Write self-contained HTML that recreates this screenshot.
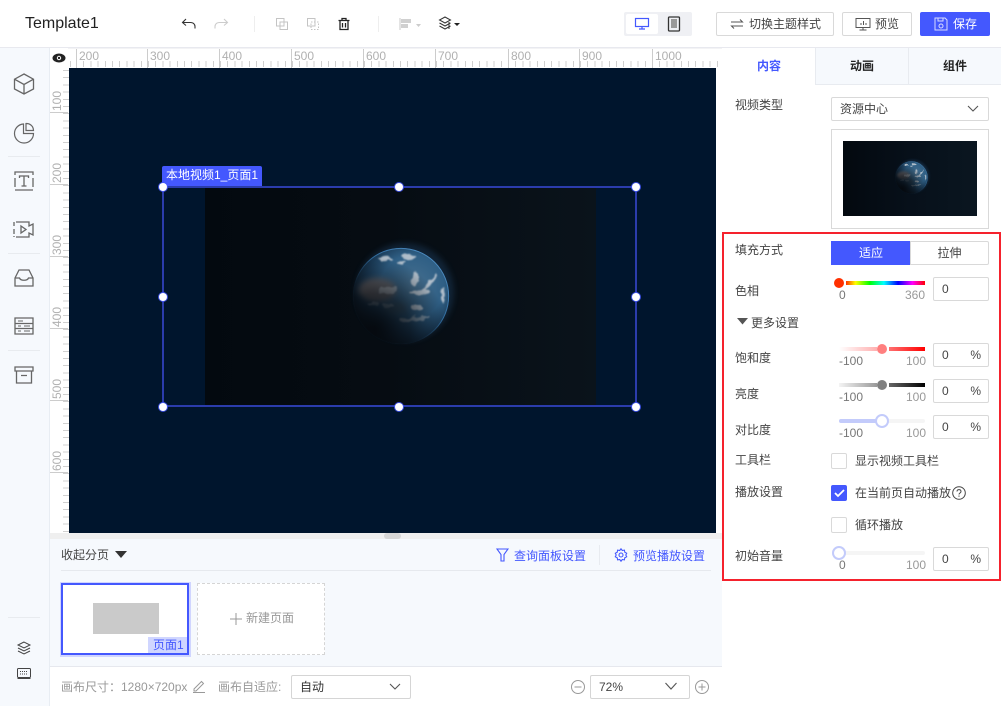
<!DOCTYPE html>
<html lang="zh"><head><meta charset="utf-8"><title>Template1</title>
<style>
*{box-sizing:border-box}
html,body{margin:0;padding:0;width:1001px;height:706px;overflow:hidden;background:#fff;font-family:"Liberation Sans","Noto Sans CJK SC",sans-serif;font-size:12px;color:#333}
.a{position:absolute}
.t{position:absolute;white-space:nowrap;line-height:16px}
svg{position:absolute;overflow:visible}
.btn{position:absolute;top:12px;height:24px;border:1px solid #d9d9d9;border-radius:2px;background:#fff;line-height:22px;color:#444}
.inp{position:absolute;left:933px;width:56px;height:24px;border:1px solid #d9d9d9;border-radius:2px;background:#fff;color:#444;line-height:22px;padding-left:8px}
.inp i{position:absolute;right:7px;top:0;font-style:normal}
.lab{position:absolute;left:735px;white-space:nowrap;line-height:16px;color:#444}
.min,.max{position:absolute;font-size:12px;line-height:14px;color:#999}
.min{color:#777}
.cb{position:absolute;left:831px;width:16px;height:16px;border:1px solid #d9d9d9;border-radius:2px;background:#fff}
.h{position:absolute;width:8px;height:8px;border-radius:50%;background:#fff;box-shadow:0 0 0 1px rgba(68,88,254,.85)}
.rh{position:absolute;top:0;height:20px;font-size:12px;line-height:14px;color:#b0b0b0;border-left:1px solid #ccc;padding-left:2px}
.rv{position:absolute;left:0;width:18px;border-bottom:1px solid #ccc;height:60px}
.rv span{position:absolute;left:1px;bottom:1px;transform-origin:0 100%;transform:rotate(-90deg) translate(0,13px);font-size:12px;line-height:13px;color:#b0b0b0;white-space:nowrap}
</style></head><body>

<svg width="0" height="0" style="position:absolute"><defs>
<radialGradient id="gb" cx="62%" cy="40%" r="66%"><stop offset="0" stop-color="#47708f"/><stop offset=".5" stop-color="#2f5f85"/><stop offset=".75" stop-color="#1a3a56"/><stop offset="1" stop-color="#0a1520"/></radialGradient>
<linearGradient id="gr" x1="1" y1="0" x2="0.1" y2="1"><stop offset="0" stop-color="#5a9ad0"/><stop offset=".45" stop-color="#2f6a9c"/><stop offset=".7" stop-color="#0c1a28" stop-opacity=".4"/><stop offset="1" stop-color="#060b10" stop-opacity="0"/></linearGradient>
<radialGradient id="gs" cx="22%" cy="85%" r="75%"><stop offset="0" stop-color="#05090e" stop-opacity=".97"/><stop offset=".5" stop-color="#05090e" stop-opacity=".65"/><stop offset="1" stop-color="#05090e" stop-opacity="0"/></radialGradient>
<filter id="cl" x="-20%" y="-20%" width="140%" height="140%"><feTurbulence type="fractalNoise" baseFrequency=".14" numOctaves="2" seed="4"/><feDisplacementMap in="SourceGraphic" scale="7" xChannelSelector="R" yChannelSelector="G"/><feGaussianBlur stdDeviation=".7"/></filter>
<filter id="bl2" x="-30%" y="-30%" width="160%" height="160%"><feGaussianBlur stdDeviation="3"/></filter>
<clipPath id="cc"><circle cx="50" cy="50" r="49"/></clipPath>
<symbol id="earth" viewBox="0 0 100 100" overflow="visible">
<circle cx="54" cy="46" r="50" fill="#2a5a8a" opacity=".28" filter="url(#bl2)"/>
<circle cx="50" cy="50" r="49" fill="url(#gb)"/>
<g clip-path="url(#cc)">
<g filter="url(#bl2)"><ellipse cx="26" cy="44" rx="19" ry="12" fill="#857570" opacity=".75"/><ellipse cx="44" cy="62" rx="12" ry="6" fill="#4c606c" opacity=".5"/></g>
<g filter="url(#cl)" fill="#c6ced6" opacity=".85">
<ellipse cx="58" cy="10" rx="8" ry="3"/><ellipse cx="35" cy="12" rx="7" ry="2"/><ellipse cx="50" cy="16" rx="5" ry="1.500"/>
<ellipse cx="64" cy="33" rx="2.500" ry="7.500"/><ellipse cx="79" cy="36" rx="11" ry="2" transform="rotate(-50 79 36)"/><ellipse cx="70" cy="46" rx="11" ry="2.200"/>
<ellipse cx="93" cy="49" rx="1.800" ry="8"/><ellipse cx="67" cy="62" rx="6" ry="3"/><ellipse cx="64" cy="73" rx="16" ry="2" opacity=".7" transform="rotate(-6 64 73)"/>
<ellipse cx="36" cy="44" rx="9" ry="4" opacity=".7"/><ellipse cx="22" cy="58" rx="5" ry="2" opacity=".5"/><ellipse cx="38" cy="60" rx="6" ry="2" opacity=".5"/></g>
<circle cx="50" cy="50" r="49" fill="url(#gs)"/>
</g>
<circle cx="50" cy="50" r="48.600" fill="none" stroke="url(#gr)" stroke-width="1"/>
</symbol>
</defs></svg>

<!-- top bar -->
<div class="a" style="left:0;top:0;width:1001px;height:48px;background:#fff;border-bottom:1px solid #e8e9ef"></div>
<div class="t" style="left:25px;top:14px;font-size:16px;line-height:20px;color:#222">Template1</div>
<svg style="left:180px;top:15px" width="18" height="18" viewBox="0 0 18 18" fill="none" stroke="#333" stroke-width="1.100"><path d="M6 4 2.500 7.500 6 10.500M3 7.500h7.500c3 0 4.500 2 4.500 4v2"/></svg>
<svg style="left:212px;top:15px" width="18" height="18" viewBox="0 0 18 18" fill="none" stroke="#ccc" stroke-width="1.100"><path d="M12 4l3.500 3.500L12 10.500M15 7.500H7.500c-3 0-4.500 2-4.500 4v2"/></svg>
<div class="a" style="left:254px;top:16px;width:1px;height:16px;background:#eee"></div>
<svg style="left:275px;top:17px" width="14" height="14" viewBox="0 0 14 14" fill="none" stroke="#c4c4c4"><rect x="1.500" y="1.500" width="7.500" height="7.500"/><rect x="5" y="5" width="7.500" height="7.500"/></svg>
<svg style="left:306px;top:17px" width="14" height="14" viewBox="0 0 14 14" fill="none" stroke="#c4c4c4"><rect x="1.500" y="1.500" width="7.500" height="7.500"/><rect x="5" y="5" width="7.500" height="7.500" stroke-dasharray="1.500 1.500"/></svg>
<svg style="left:337px;top:17px" width="14" height="14" viewBox="0 0 14 14" fill="none" stroke="#222" stroke-width="1.300"><path d="M1.500 3.500h11M5 3.500V1.500h4v2M3 3.500V12.500h8V3.500M5.500 6v4.500M8.500 6v4.500"/></svg>
<div class="a" style="left:378px;top:16px;width:1px;height:16px;background:#eee"></div>
<svg style="left:399px;top:17px" width="24" height="14" viewBox="0 0 24 14"><path d="M1 1v12" stroke="#c8c8c8"/><rect x="2" y="2" width="10" height="4" fill="#d0d0d0"/><rect x="2" y="7" width="7" height="4" fill="#d0d0d0"/><path d="M17 7h5l-2.500 3z" fill="#ccc"/></svg>
<svg style="left:438px;top:16px" width="24" height="16" viewBox="0 0 24 16" fill="none" stroke="#333"><path d="M7 1 1.500 4 7 7l5.500-3zM1.500 7 7 10l5.500-3M1.500 10 7 13l5.500-3"/><path d="M11 6v7" stroke-width="1"/><path d="M16 7h6l-3 3z" fill="#222" stroke="none"/></svg>

<div class="a" style="left:624px;top:12px;width:68px;height:24px;background:#eff0f4;border-radius:2px"></div>
<div class="a" style="left:626px;top:14px;width:32px;height:20px;background:#fff;border-radius:2px"></div>
<svg style="left:634px;top:17px" width="16" height="14" viewBox="0 0 16 14" fill="none" stroke="#4458fe" stroke-width="1.200"><rect x="1.500" y="1.500" width="13" height="8"/><path d="M8 9.500v2M5 12h6"/></svg>
<svg style="left:667px;top:16px" width="14" height="16" viewBox="0 0 14 16" fill="none" stroke="#333" stroke-width="1.300"><rect x="1.500" y="1" width="11" height="14" rx="1"/><rect x="4" y="3" width="6" height="9" fill="#999" stroke="none"/></svg>

<div class="btn" style="left:716px;width:118px"></div>
<svg style="left:730px;top:18px" width="14" height="12" viewBox="0 0 14 12" fill="none" stroke="#555"><path d="M1 4h11.500L10 1.500M13 8H1.500L4 10.500"/></svg>
<div class="t" style="left:749px;top:16px;color:#444">切换主题样式</div>
<div class="btn" style="left:842px;width:70px"></div>
<svg style="left:855px;top:17px" width="16" height="14" viewBox="0 0 16 14" fill="none" stroke="#555"><rect x="1" y="1.500" width="14" height="9"/><path d="M8 10.500V13M4.500 13h7M6 8V6M8.500 8V4M11 8V6"/></svg>
<div class="t" style="left:875px;top:16px;color:#444">预览</div>
<div class="btn" style="left:920px;width:70px;background:#4458fe;border-color:#4458fe"></div>
<svg style="left:934px;top:17px" width="14" height="14" viewBox="0 0 14 14" fill="none" stroke="#d8dcff"><path d="M1 1h10l2 2v10H1z"/><path d="M4 1v3h5V1"/><circle cx="7" cy="9" r="2"/></svg>
<div class="t" style="left:953px;top:16px;color:#fff">保存</div>

<!-- left sidebar -->
<div class="a" style="left:0;top:48px;width:50px;height:658px;background:#f6f9fd;border-right:1px solid #e8edf3"></div>
<svg style="left:13px;top:72px" width="22" height="24" viewBox="0 0 22 24" fill="none" stroke="#666" stroke-width="1.300"><path d="M11 2 20.500 7.200V17L11 22 1.500 17V7.200zM1.500 7.200 11 12.500 20.500 7.200M11 12.500V22"/></svg>
<svg style="left:13px;top:122px" width="22" height="22" viewBox="0 0 22 22" fill="none" stroke="#666" stroke-width="1.200"><path d="M10.500 2A9.500 9.500 0 1 0 20.500 11.500H10.500z"/><path d="M13 1.500A7 7 0 0 1 20.500 8.500H13z"/></svg>
<div class="a" style="left:8px;top:156px;width:32px;height:1px;background:#e8ebef"></div>
<svg style="left:14px;top:171px" width="20" height="20" viewBox="0 0 20 20" fill="none" stroke="#666" stroke-width="1.300"><path d="M1 4V1h18v3M1 7v9M19 7v9M1 19h18"/><path d="M5.500 7V5h9v2M10 5v10M7.500 15h5"/></svg>
<svg style="left:13px;top:221px" width="22" height="17" viewBox="0 0 22 17" fill="none" stroke="#666" stroke-width="1.300"><path d="M3 1h13v4l4-2v11l-4-2v4H3"/><path d="M1 1v4M1 8v5M1 15v1"/><path d="M8 5l5 3.500L8 12z"/></svg>
<div class="a" style="left:8px;top:253px;width:32px;height:1px;background:#e8ebef"></div>
<svg style="left:14px;top:269px" width="20" height="18" viewBox="0 0 20 18" fill="none" stroke="#666" stroke-width="1.300"><path d="M1 9 5 1h10l4 8v8H1zM1 9h4.500c1 3 8 3 9 0H19"/></svg>
<svg style="left:14px;top:317px" width="20" height="18" viewBox="0 0 20 18" fill="none" stroke="#666" stroke-width="1.300"><path d="M1 1h18v16H1zM1 6.500h18M1 11.500h18"/><path d="M4 4h5M4 9h3M10 9h6M4 14h3M10 14h6" stroke-width="1"/></svg>
<div class="a" style="left:8px;top:350px;width:32px;height:1px;background:#e8ebef"></div>
<svg style="left:14px;top:366px" width="20" height="18" viewBox="0 0 20 18" fill="none" stroke="#666" stroke-width="1.300"><path d="M1 1h18v4H1zM2.500 5v12h15V5M7 9.500h6"/></svg>
<div class="a" style="left:8px;top:617px;width:32px;height:1px;background:#e8ebef"></div>
<svg style="left:17px;top:641px" width="14" height="14" viewBox="0 0 14 14" fill="none" stroke="#444"><path d="M7 1 1 4l6 3 6-3zM1 7l6 3 6-3M1 10l6 3 6-3"/></svg>
<svg style="left:17px;top:668px" width="14" height="11" viewBox="0 0 14 11" fill="none" stroke="#444"><rect x=".5" y=".5" width="13" height="9" rx="1"/><path d="M3 3.500h8M3 6h8" stroke-dasharray="1 1"/><path d="M.5 10.500h13"/></svg>

<!-- rulers -->
<div class="a" style="left:50px;top:48px;width:672px;height:20px;background:#f3f3f5"></div>
<div class="a" style="left:50px;top:48px;width:18px;height:20px;background:#fff"></div>
<svg style="left:52px;top:53px" width="14" height="10" viewBox="0 0 14 10"><ellipse cx="7" cy="5" rx="6.500" ry="4.500" fill="#222"/><circle cx="7" cy="5" r="2.200" fill="#fff"/><circle cx="7" cy="5" r="1.200" fill="#222"/></svg>
<div class="a" style="left:68px;top:49px;width:654px;height:19px;background:#fff;overflow:hidden">
<div class="a" style="left:0;top:12px;width:654px;height:6px;background:repeating-linear-gradient(90deg,#d0d0d0 0 1px,transparent 1px 7.200px);background-position:8px 0"></div>
<div class="rh" style="left:8px">200</div><div class="rh" style="left:79px">300</div><div class="rh" style="left:151px">400</div><div class="rh" style="left:223px">500</div><div class="rh" style="left:295px">600</div><div class="rh" style="left:367px">700</div><div class="rh" style="left:440px">800</div><div class="rh" style="left:511px">900</div><div class="rh" style="left:584px">1000</div>
</div>
<div class="a" style="left:50px;top:68px;width:19px;height:465px;background:#fff;overflow:hidden">
<div class="a" style="left:13px;top:0;width:6px;height:465px;background:repeating-linear-gradient(180deg,#d0d0d0 0 1px,transparent 1px 7.200px);background-position:0 2px"></div>
<div class="rv" style="top:-15px"><span>100</span></div><div class="rv" style="top:57px"><span>200</span></div><div class="rv" style="top:129px"><span>300</span></div><div class="rv" style="top:201px"><span>400</span></div><div class="rv" style="top:273px"><span>500</span></div><div class="rv" style="top:345px"><span>600</span></div>
</div>

<!-- canvas -->
<div class="a" style="left:69px;top:68px;width:647px;height:465px;background:#00152d"></div>
<div class="a" style="left:716px;top:68px;width:6px;height:465px;background:#fff"></div>
<div class="a" style="left:205px;top:187px;width:391px;height:219px;background:linear-gradient(90deg,#03090f 0,#060c12 45%,#0a131b 100%)"></div>
<svg style="left:352px;top:247px" width="98" height="98" viewBox="0 0 100 100"><use href="#earth"/></svg>
<div class="a" style="left:162px;top:186px;width:475px;height:221px;border:2px solid #2b3cac"></div>
<div class="a" style="left:162px;top:166px;width:100px;height:20px;background:#4458fe;border-radius:2px 2px 0 0;color:#fff;line-height:19px;padding-left:4px;white-space:nowrap">本地视频1_页面1</div>
<div class="h" style="left:159px;top:183px"></div><div class="h" style="left:395px;top:183px"></div><div class="h" style="left:632px;top:183px"></div>
<div class="h" style="left:159px;top:293px"></div><div class="h" style="left:632px;top:293px"></div>
<div class="h" style="left:159px;top:403px"></div><div class="h" style="left:395px;top:403px"></div><div class="h" style="left:632px;top:403px"></div>

<!-- scrollbar strip -->
<div class="a" style="left:50px;top:533px;width:672px;height:6px;background:#efefef"></div>
<div class="a" style="left:384px;top:533px;width:17px;height:6px;background:#d6d6d6;border-radius:3px"></div>

<!-- pages panel -->
<div class="a" style="left:50px;top:539px;width:672px;height:127px;background:#f6f9fd"></div>
<div class="a" style="left:61px;top:570px;width:650px;height:1px;background:#e6e9ee"></div>
<div class="t" style="left:61px;top:547px;color:#444">收起分页</div>
<svg style="left:115px;top:551px" width="12" height="8" viewBox="0 0 12 8"><path d="M0 0h12L6 7z" fill="#333"/></svg>
<svg style="left:496px;top:548px" width="13" height="14" viewBox="0 0 13 14" fill="none" stroke="#4458fe" stroke-width="1.100"><path d="M1 1h11L8 6.500V13H5V6.500z"/></svg>
<div class="t" style="left:514px;top:548px;color:#4458fe">查询面板设置</div>
<div class="a" style="left:599px;top:545px;width:1px;height:20px;background:#e8ebf0"></div>
<svg style="left:614px;top:548px" width="14" height="14" viewBox="0 0 14 14" fill="none" stroke="#4458fe" stroke-width="1.100"><path d="M7 .8l1.300 1.700 2.100-.4.400 2.100 1.900 1L11.800 7l.9 1.800-1.900 1-.4 2.100-2.100-.4L7 13.200l-1.300-1.700-2.100.4-.4-2.100-1.900-1L2.200 7l-.9-1.800 1.900-1 .4-2.100 2.100.4z"/><circle cx="7" cy="7" r="2"/></svg>
<div class="t" style="left:633px;top:548px;color:#4458fe">预览播放设置</div>

<div class="a" style="left:60px;top:582px;width:131px;height:75px;border:2px solid #d0d5ff"></div>
<div class="a" style="left:61px;top:583px;width:128px;height:72px;background:#fff;border:2px solid #4458fe"></div>
<div class="a" style="left:93px;top:603px;width:66px;height:31px;background:#cacaca"></div>
<div class="a" style="left:148px;top:637px;width:39px;height:16px;background:#d0d6ff;color:#4458fe;line-height:17px;padding-left:5px;white-space:nowrap">页面1</div>
<div class="a" style="left:197px;top:583px;width:128px;height:72px;background:#fff;border:1px dashed #d5d5d5"></div>
<svg style="left:230px;top:613px" width="12" height="12" viewBox="0 0 12 12" stroke="#999"><path d="M6 0v12M0 6h12"/></svg>
<div class="t" style="left:246px;top:610px;color:#999">新建页面</div>

<!-- bottom bar -->
<div class="a" style="left:50px;top:666px;width:672px;height:40px;background:#fff;border-top:1px solid #e6e8ee"></div>
<div class="t" style="left:61px;top:679px;color:#999">画布尺寸：1280×720px</div>
<svg style="left:192px;top:679px" width="14" height="14" viewBox="0 0 14 14" fill="none" stroke="#999"><path d="M2 10 9.500 2.500l2 2L4 12H2zM1 13.500h12"/></svg>
<div class="t" style="left:218px;top:679px;color:#999">画布自适应:</div>
<div class="a" style="left:291px;top:675px;width:120px;height:24px;border:1px solid #d5d5d5;border-radius:2px;line-height:22px;padding-left:8px;color:#333">自动</div>
<svg style="left:389px;top:683px" width="12" height="8" viewBox="0 0 12 8" fill="none" stroke="#555" stroke-width="1.100"><path d="M1 1l5 5 5-5"/></svg>
<svg style="left:571px;top:680px" width="14" height="14" viewBox="0 0 14 14" fill="none" stroke="#999"><circle cx="7" cy="7" r="6.500"/><path d="M3.500 7h7"/></svg>
<div class="a" style="left:590px;top:675px;width:100px;height:24px;border:1px solid #d5d5d5;border-radius:2px;line-height:22px;padding-left:8px;color:#444">72%</div>
<svg style="left:665px;top:682px" width="12" height="9" viewBox="0 0 12 9" fill="none" stroke="#555" stroke-width="1.100"><path d="M.5 1l5.500 6 5.500-6"/></svg>
<svg style="left:695px;top:680px" width="14" height="14" viewBox="0 0 14 14" fill="none" stroke="#999"><circle cx="7" cy="7" r="6.500"/><path d="M3.500 7h7M7 3.500v7"/></svg>

<!-- right panel -->
<div class="a" style="left:722px;top:48px;width:279px;height:658px;background:#fff"></div>
<div class="a" style="left:815px;top:48px;width:186px;height:37px;background:#f6f9fd;border-bottom:1px solid #e8ebf0;border-left:1px solid #e8ebf0"></div>
<div class="a" style="left:908px;top:48px;width:1px;height:36px;background:#e8ebf0"></div>
<div class="t" style="left:757px;top:58px;color:#4458fe;font-weight:bold">内容</div>
<div class="t" style="left:850px;top:58px;color:#222;font-weight:bold">动画</div>
<div class="t" style="left:943px;top:58px;color:#222;font-weight:bold">组件</div>
<div class="lab" style="top:97px">视频类型</div>
<div class="a" style="left:831px;top:97px;width:158px;height:24px;border:1px solid #d9d9d9;border-radius:2px;line-height:22px;padding-left:8px;color:#444">资源中心</div>
<svg style="left:967px;top:105px" width="12" height="8" viewBox="0 0 12 8" fill="none" stroke="#555" stroke-width="1.100"><path d="M1 1l5 5 5-5"/></svg>
<div class="a" style="left:831px;top:129px;width:158px;height:100px;border:1px solid #d9d9d9"></div>
<div class="a" style="left:843px;top:141px;width:134px;height:75px;background:linear-gradient(90deg,#03090f,#07101a 50%,#0a1620)"></div>
<svg style="left:895px;top:161px" width="33" height="33" viewBox="0 0 100 100"><use href="#earth"/></svg>

<!-- red box -->
<div class="a" style="left:722px;top:232px;width:279px;height:349px;border:2px solid #f5222d"></div>

<div class="lab" style="top:242px">填充方式</div>
<div class="a" style="left:831px;top:241px;width:80px;height:24px;background:#4458fe;color:#fff;text-align:center;line-height:24px">适应</div>
<div class="a" style="left:910px;top:241px;width:79px;height:24px;border:1px solid #d9d9d9;border-radius:0 2px 2px 0;text-align:center;line-height:22px;color:#444">拉伸</div>

<div class="lab" style="top:283px">色相</div>
<div class="a" style="left:846px;top:281px;width:79px;height:4px;background:linear-gradient(90deg,#ff3000,#ff0 12%,#0f0 30%,#0ff 48%,#00f 66%,#f0f 84%,#f00)"></div>
<div class="a" style="left:834px;top:278px;width:10px;height:10px;border-radius:50%;background:#ff3000"></div>
<div class="min" style="left:839px;top:288px">0</div><div class="max" style="left:905px;top:288px">360</div>
<div class="inp" style="top:277px">0</div>

<svg style="left:737px;top:318px" width="12" height="7" viewBox="0 0 12 7"><path d="M0 0h11L5.500 6.500z" fill="#555"/></svg>
<div class="t" style="left:751px;top:315px;color:#444">更多设置</div>

<div class="lab" style="top:350px">饱和度</div>
<div class="a" style="left:839px;top:347px;width:38px;height:4px;background:linear-gradient(90deg,#fff,#ffb0b0)"></div>
<div class="a" style="left:889px;top:347px;width:36px;height:4px;background:linear-gradient(90deg,#ff7070,#f00)"></div>
<div class="a" style="left:877px;top:344px;width:10px;height:10px;border-radius:50%;background:#ff7f7f"></div>
<div class="min" style="left:839px;top:354px">-100</div><div class="max" style="left:906px;top:354px">100</div>
<div class="inp" style="top:343px">0<i>%</i></div>

<div class="lab" style="top:386px">亮度</div>
<div class="a" style="left:839px;top:383px;width:38px;height:4px;background:linear-gradient(90deg,#f4f4f4,#999)"></div>
<div class="a" style="left:889px;top:383px;width:36px;height:4px;background:linear-gradient(90deg,#666,#000)"></div>
<div class="a" style="left:877px;top:380px;width:10px;height:10px;border-radius:50%;background:#808080"></div>
<div class="min" style="left:839px;top:390px">-100</div><div class="max" style="left:906px;top:390px">100</div>
<div class="inp" style="top:379px">0<i>%</i></div>

<div class="lab" style="top:422px">对比度</div>
<div class="a" style="left:839px;top:419px;width:86px;height:4px;background:#f5f5f5;border-radius:2px"></div>
<div class="a" style="left:839px;top:419px;width:38px;height:4px;background:#c3cbfb;border-radius:2px"></div>
<div class="a" style="left:875px;top:414px;width:14px;height:14px;border-radius:50%;background:#fff;border:2px solid #c3cbfb"></div>
<div class="min" style="left:839px;top:426px">-100</div><div class="max" style="left:906px;top:426px">100</div>
<div class="inp" style="top:415px">0<i>%</i></div>

<div class="lab" style="top:452px">工具栏</div>
<div class="cb" style="top:453px"></div>
<div class="t" style="left:855px;top:453px;color:#444">显示视频工具栏</div>

<div class="lab" style="top:484px">播放设置</div>
<div class="cb" style="top:485px;background:#4458fe;border-color:#4458fe"></div>
<svg style="left:834px;top:489px" width="11" height="9" viewBox="0 0 11 9" fill="none" stroke="#fff" stroke-width="1.800"><path d="M1 4l3 3 6-6"/></svg>
<div class="t" style="left:855px;top:485px;color:#444">在当前页自动播放</div>
<svg style="left:952px;top:486px" width="14" height="14" viewBox="0 0 14 14" fill="none" stroke="#444"><circle cx="7" cy="7" r="6.300"/><path d="M5 5.500c0-2.500 4-2.500 4 0 0 1.500-2 1.500-2 3M7 9.500v1.300"/></svg>
<div class="cb" style="top:517px"></div>
<div class="t" style="left:855px;top:517px;color:#444">循环播放</div>

<div class="lab" style="top:548px">初始音量</div>
<div class="a" style="left:839px;top:551px;width:86px;height:4px;background:#f5f5f5;border-radius:2px"></div>
<div class="a" style="left:832px;top:546px;width:14px;height:14px;border-radius:50%;background:#fff;border:2px solid #c3cbfb"></div>
<div class="min" style="left:839px;top:558px">0</div><div class="max" style="left:906px;top:558px">100</div>
<div class="inp" style="top:547px">0<i>%</i></div>

</body></html>
